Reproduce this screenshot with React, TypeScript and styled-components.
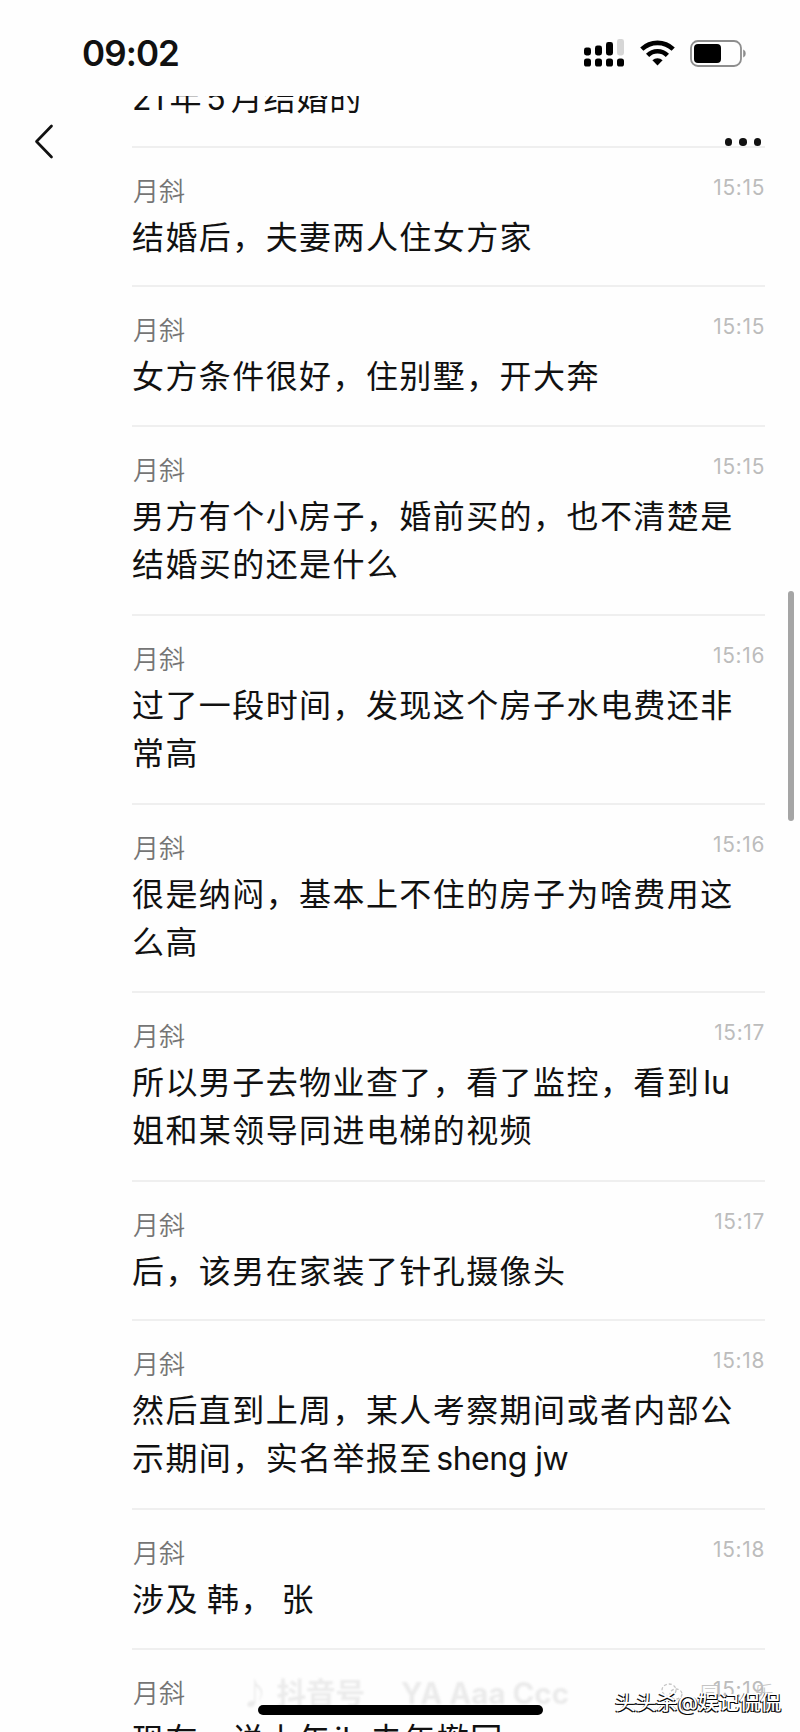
import React from "react";
import styled, { createGlobalStyle } from "styled-components";

const Global = createGlobalStyle`
  * { box-sizing: border-box; }
  html, body { margin: 0; background: #fefefe; overflow: hidden; }
  body { font-family: Inter, "Noto Sans CJK SC", sans-serif; color: #111; }
`;
const Screen = styled.div`
  position: relative; width: 800px; height: 1732px; overflow: hidden;
  background: #fefefe; display: flex; flex-direction: column;
`;
const StatusBar = styled.header`
  flex: none; height: 96px; padding: 14px 54px 0 82px;
  display: flex; align-items: center; justify-content: space-between;
`;
const Clock = styled.div`
  font-size: 35px; font-weight: 600; line-height: 48px; padding-bottom: 4px;
  letter-spacing: -0.9px;
`;
const StatusIcons = styled.div`
  display: flex; align-items: center; gap: 15px; padding-bottom: 4px;
  svg { display: block; }
`;
const Body = styled.main`
  flex: 1; min-height: 0; display: flex; overflow: hidden;
`;
const Side = styled.div`
  flex: none; width: 132px; padding: 28px 0 0 34px;
`;
const List = styled.div`
  flex: none; width: 633px; overflow: hidden;
`;
const Item = styled.article<{ $h: number }>`
  height: ${(p) => p.$h}px; padding-top: 28px;
  border-bottom: 2px solid #efefef;
`;
const Previous = styled.div`
  height: 52px; display: flex; align-items: flex-start;
  border-bottom: 2px solid #efefef;
`;
const Meta = styled.div`
  display: flex; justify-content: space-between; height: 38px;
`;
const Name = styled.span`
  font-size: 26px; line-height: 32px; color: #757575; font-weight: 350;
  padding-left: 1px;
`;
const Time = styled.time`
  font-size: 20.8px; line-height: 24px; color: #bcbcbc; font-weight: 400;
  letter-spacing: 0.7px;
`;
const Message = styled.p<{ $up?: number; $track?: number }>`
  margin: ${(p) => -(p.$up || 0)}px 0 0; font-size: 32px; line-height: 48px;
  letter-spacing: ${(p) => p.$track ?? 1.42}px; white-space: pre;
`;
const Latin = styled.span<{ $l?: number; $r?: number; $track?: number }>`
  letter-spacing: ${(p) => p.$track || 0}px;
  margin: 0 ${(p) => p.$r || 0}px 0 ${(p) => p.$l || 0}px;
`;
const More = styled.div`
  position: absolute; left: 724.5px; top: 138px; display: flex; gap: 7px;
`;
const Dot = styled.i`
  width: 7.5px; height: 7.5px; border-radius: 50%; background: #111;
`;
const ScrollThumb = styled.div`
  position: absolute; left: 788px; top: 591px; width: 6px; height: 230px;
  border-radius: 3px; background: #a5a5a5;
`;
const HomeIndicator = styled.div`
  position: absolute; left: 258px; top: 1705px; width: 285px; height: 10px;
  border-radius: 5px; background: #000;
`;
const FaintMark = styled.div`
  position: absolute; left: 240px; top: 1676px; display: flex; gap: 36px;
  font-size: 29.5px; line-height: 34px; font-weight: 700; color: #ebebeb;
  filter: blur(1.2px); white-space: pre;
`;
const Under = styled.div`
  position: absolute; left: 660px; top: 1682px; display: flex; gap: 16px;
  font-size: 20px; line-height: 24px; font-weight: 300; color: #c4c4c4;
`;
const Tail = styled.span`
  margin-left: 18px;
`;
const Credit = styled.div`
  position: absolute; left: 615px; top: 1688px; font-size: 20.8px; line-height: 30px;
  font-weight: 500; color: #fff; white-space: pre;
  text-shadow: 1px 1px 0 #000, -1px 1px 0 #111;
`;

const items: { t: string; h: number; lines: React.ReactNode[] }[] = [
  { t: "15:15", h: 139, lines: ["结婚后，夫妻两人住女方家"] },
  { t: "15:15", h: 140, lines: ["女方条件很好，住别墅，开大奔"] },
  { t: "15:15", h: 189, lines: ["男方有个小房子，婚前买的，也不清楚是", "结婚买的还是什么"] },
  { t: "15:16", h: 189, lines: ["过了一段时间，发现这个房子水电费还非", "常高"] },
  { t: "15:16", h: 188, lines: ["很是纳闷，基本上不住的房子为啥费用这", "么高"] },
  { t: "15:17", h: 189, lines: [<>所以男子去物业查了，看了监控，看到<Latin $l={3}>lu</Latin></>, "姐和某领导同进电梯的视频"] },
  { t: "15:17", h: 139, lines: ["后，该男在家装了针孔摄像头"] },
  { t: "15:18", h: 189, lines: ["然后直到上周，某人考察期间或者内部公", <>示期间，实名举报至<Latin $l={3.5} $track={-0.5}>sheng jw</Latin></>] },
  { t: "15:18", h: 140, lines: [<>涉及<Latin $track={-0.8}> </Latin>韩，<Latin $track={-1.3}> </Latin>张</>] },
  { t: "15:19", h: 139, lines: [<>现在，说上午<Latin $l={2} $r={8}>jb</Latin>去年撤回</>] },
];

const Signal = () => (
  <svg width="41" height="28" viewBox="0 0 41 28">
    <g fill="#000">
      <rect x="0" y="8.5" width="7" height="8" rx="2.4" />
      <rect x="11" y="6.5" width="7" height="10" rx="2.4" />
      <rect x="22" y="3" width="7" height="13.5" rx="2.4" />
      {[0, 11, 22, 33].map((x) => <rect key={x} x={x} y="19.5" width="7" height="8" rx="2.6" />)}
    </g>
    <rect x="33" y="0" width="7" height="16.5" rx="2.4" fill="#d6d6d6" />
  </svg>
);
const Wifi = () => (
  <svg width="35" height="26" viewBox="0 0 35 26">
    <g fill="none" stroke="#000" strokeWidth="4.6">
      <path d="M1.8 9.2a22.6 22.6 0 0 1 31.4 0" />
      <path d="M7.6 15.3a14.2 14.2 0 0 1 19.8 0" />
    </g>
    <path d="M17.5 25.5l-5.1-5.2a7.4 7.4 0 0 1 10.2 0z" fill="#000" />
  </svg>
);
const Battery = () => (
  <svg width="56" height="27" viewBox="0 0 56 27">
    <rect x="1" y="1" width="50" height="25" rx="7" fill="none" stroke="#8d8d8d" strokeWidth="1.8" />
    <rect x="4" y="4" width="27" height="19" rx="4" fill="#000" />
    <path d="M53.2 9.5c3.3 1.2 3.3 6.8 0 8z" fill="#8d8d8d" />
  </svg>
);
const Bubbles = () => (
  <svg width="24" height="20" viewBox="0 0 24 20" fill="none" stroke="#c4c4c4" strokeWidth="1.3" strokeDasharray="3 2">
    <ellipse cx="9" cy="8" rx="7" ry="6" />
    <ellipse cx="16" cy="12" rx="6" ry="5" />
  </svg>
);

export default function App() {
  return (
    <Screen>
      <Global />
      <StatusBar>
        <Clock>09:02</Clock>
        <StatusIcons><Signal /><Wifi /><Battery /></StatusIcons>
      </StatusBar>
      <Body>
        <Side>
          <svg width="20" height="36" viewBox="0 0 20 36" fill="none" stroke="#111" strokeWidth="2.7" strokeLinecap="round" strokeLinejoin="round">
            <path d="M17.5 2L2.500 17.5L17.5 33" />
          </svg>
        </Side>
        <List>
          <Previous>
            <Message $up={21} $track={0.8}><Latin $r={5}>21</Latin>年<Latin $l={4} $r={5}>5</Latin>月结婚的</Message>
          </Previous>
          {items.map((it, i) => (
            <Item key={i} $h={it.h}>
              <Meta><Name>月斜</Name><Time>{it.t}</Time></Meta>
              {it.lines.map((l, j) => <Message key={j}>{l}</Message>)}
            </Item>
          ))}
        </List>
      </Body>
      <More><Dot /><Dot /><Dot /></More>
      <ScrollThumb />
      <FaintMark><span>♪ 抖音号</span><span>YA Aaa Ccc</span></FaintMark>
      <HomeIndicator />
      <Under><Bubbles /><span>同</span><Tail>乐</Tail></Under>
      <Credit>头头杀@娱记侃侃</Credit>
    </Screen>
  );
}
